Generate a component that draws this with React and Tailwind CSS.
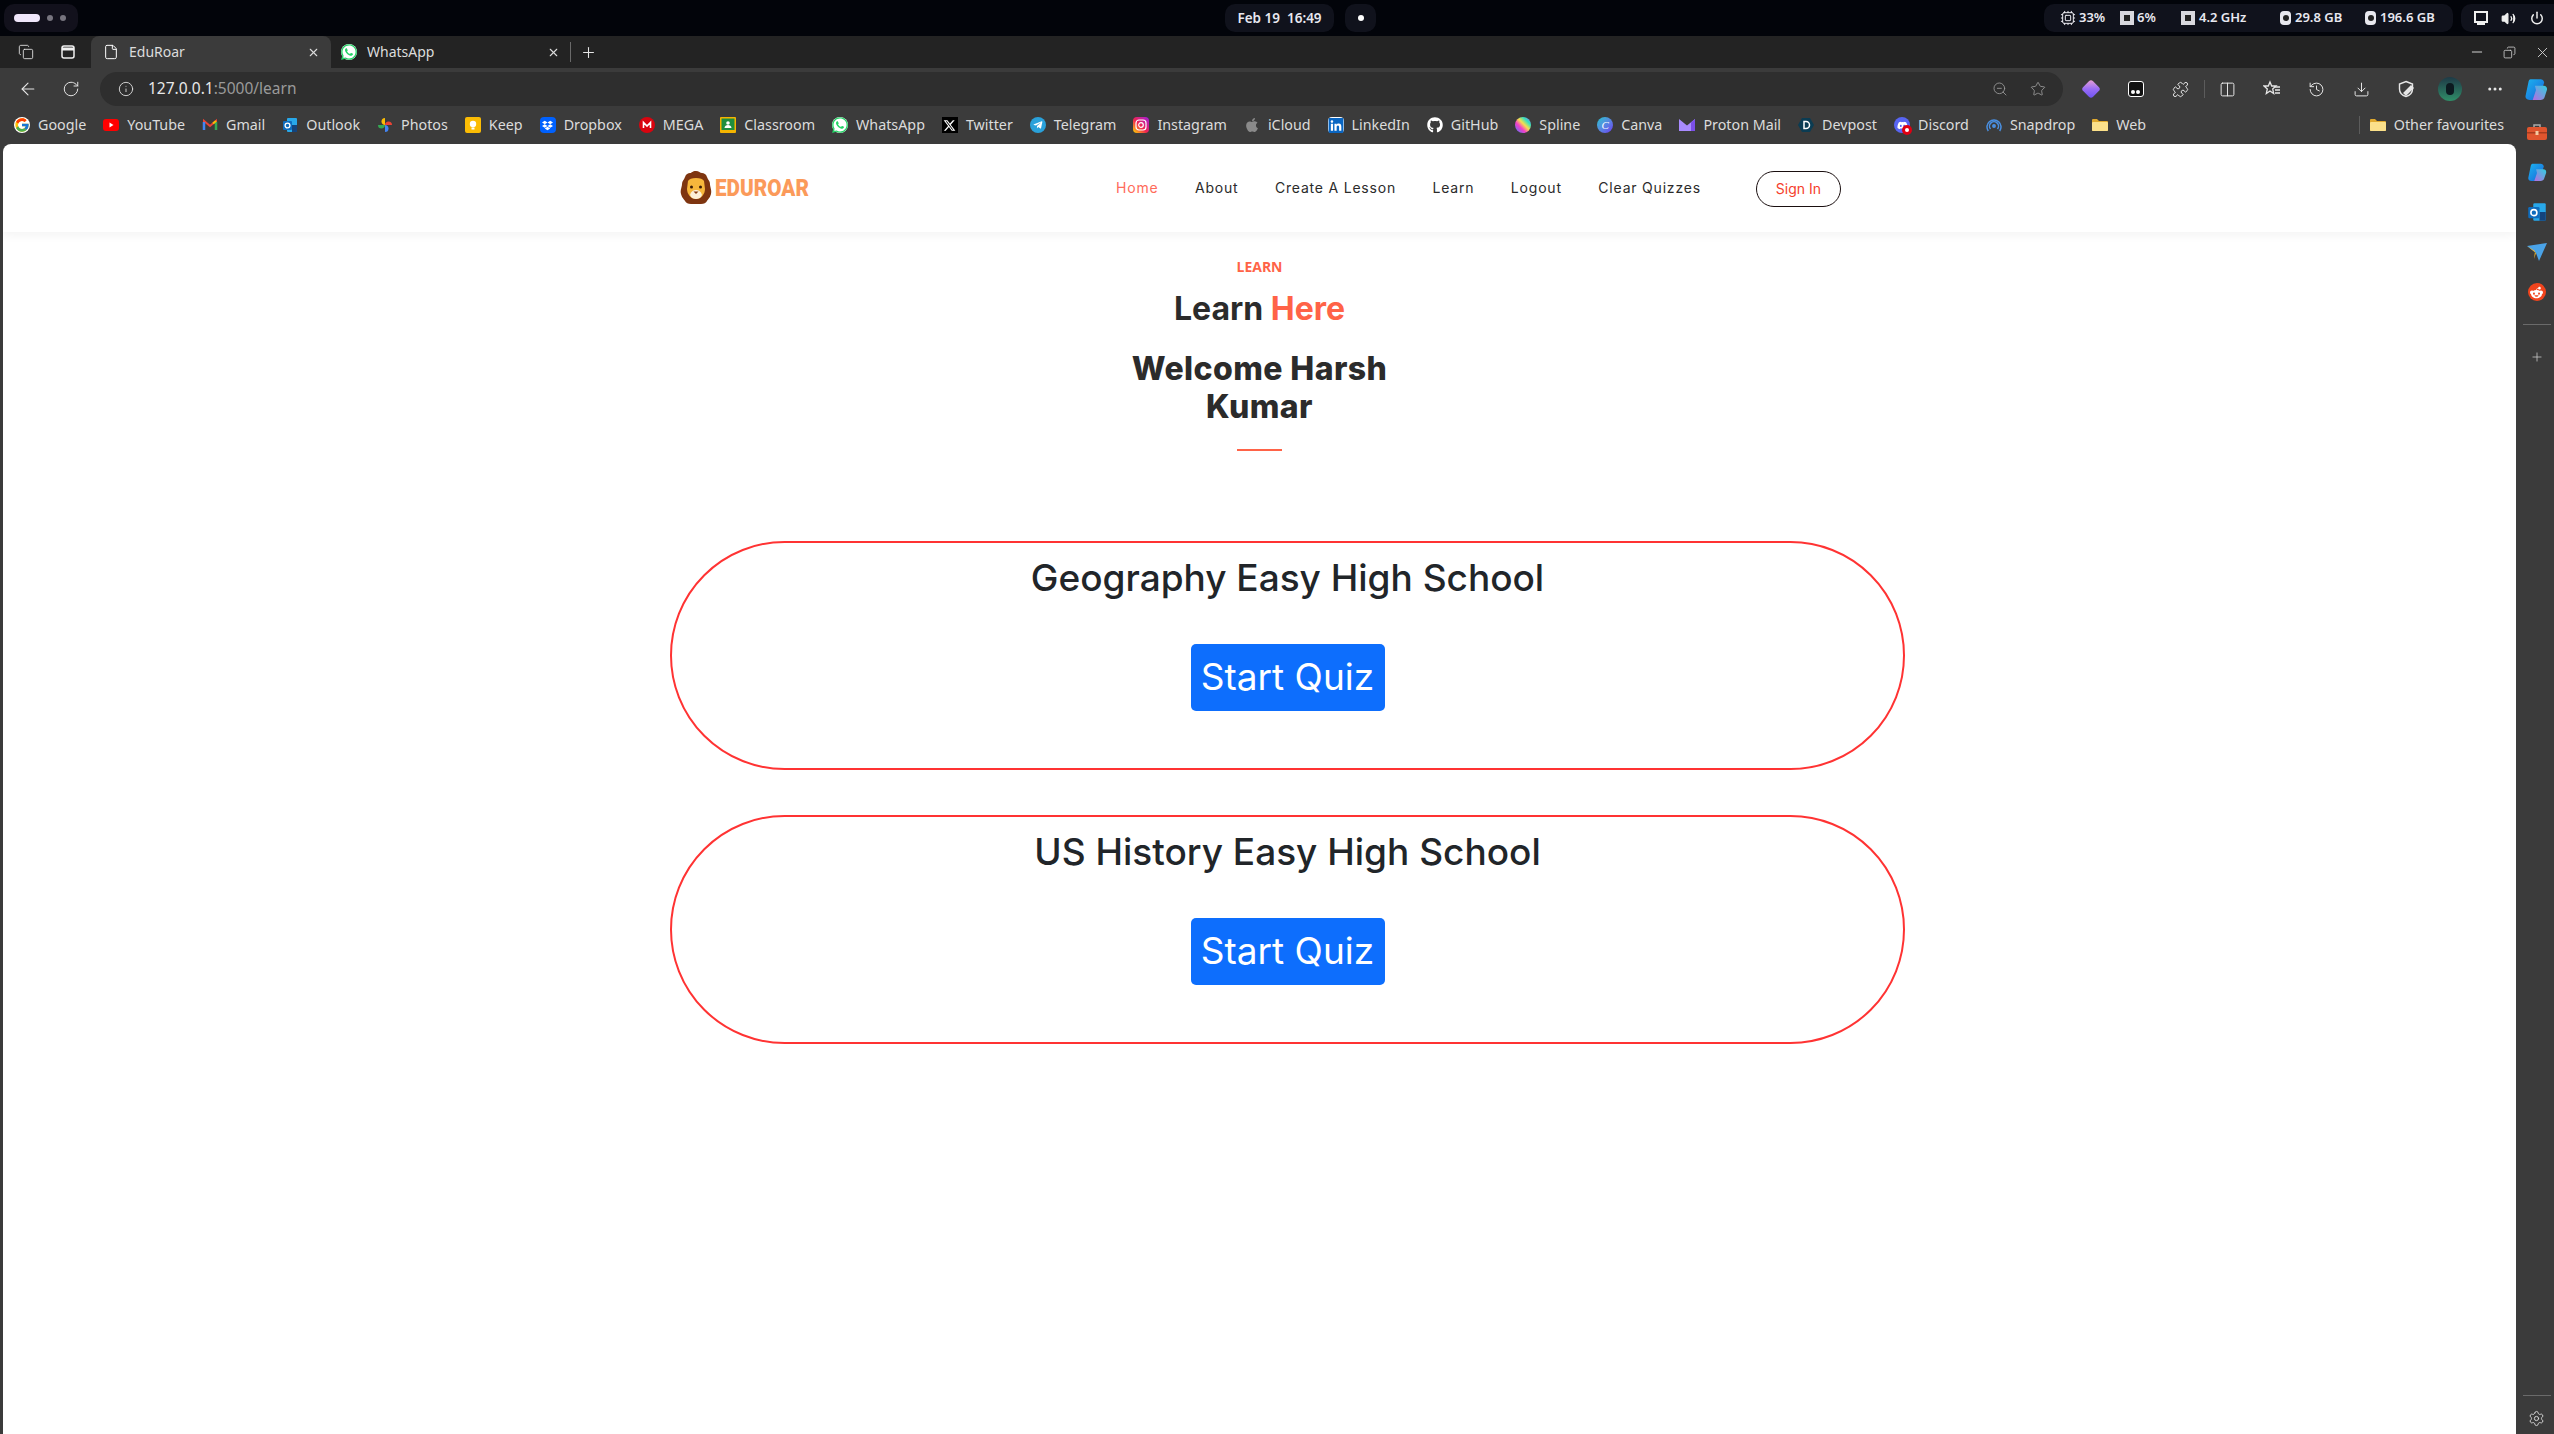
import React from "react";
import { X, Plus, ArrowLeft, RotateCw, Info, ZoomOut, Star, Puzzle, Columns2, History, Download, MoreHorizontal, Settings, Minus, Copy, Volume2, Power, File, Cpu } from "lucide-react";
import { FaWhatsapp, FaGithub, FaApple, FaLinkedin, FaDiscord, FaRedditAlien, FaXTwitter, FaDropbox } from "react-icons/fa6";
import { FaTelegramPlane } from "react-icons/fa";
import { FcGoogle } from "react-icons/fc";

const Yt = () => (
  <svg width="16" height="16" viewBox="0 0 16 16"><rect y="2" width="16" height="12" rx="3" fill="#f00" /><path d="M6.5 5.5v5l4-2.500z" fill="#fff" /></svg>
);
const Gmail = () => (
  <svg width="16" height="16" viewBox="0 0 16 16" fill="none"><path d="M2 13V4l6 5 6-5v9" stroke="#ea4335" strokeWidth="2" /><path d="M2 13V5" stroke="#4285f4" strokeWidth="2.500" /><path d="M14 13V5" stroke="#34a853" strokeWidth="2.500" /><path d="M11 6.500l3-2.500" stroke="#fbbc04" strokeWidth="2" /></svg>
);
const Outlook = ({ size = 16 }) => (
  <svg width={size} height={size} viewBox="0 0 16 16"><rect x="5" y="1" width="10" height="14" rx="1" fill="#28a8ea" /><rect x="10" y="8" width="5" height="7" fill="#14447d" /><rect x="1" y="4" width="9" height="9" rx="1" fill="#0f6cbd" /><circle cx="5.500" cy="8.500" r="2.400" fill="none" stroke="#fff" strokeWidth="1.300" /></svg>
);
const Photos = () => (
  <svg width="16" height="16" viewBox="0 0 16 16"><path d="M8 8V1a3.500 3.500 0 0 0-3.500 3.500C4.500 6.500 6 8 8 8z" fill="#fbbc04" /><path d="M8 8h7a3.500 3.500 0 0 0-3.500-3.500C9.500 4.500 8 6 8 8z" fill="#ea4335" /><path d="M8 8v7a3.500 3.500 0 0 0 3.500-3.500C11.500 9.500 10 8 8 8z" fill="#4285f4" /><path d="M8 8H1a3.500 3.500 0 0 0 3.500 3.500C6.500 11.500 8 10 8 8z" fill="#34a853" /></svg>
);
const Keep = () => (
  <svg width="16" height="16" viewBox="0 0 16 16"><rect width="16" height="16" rx="2" fill="#fbbc04" /><circle cx="8" cy="7" r="3.200" fill="#fff" /><rect x="6.500" y="10.500" width="3" height="2" fill="#fff" /></svg>
);
const Dropbox = () => (
  <span className="w-4 h-4 rounded-sm bg-[#0061fe] flex items-center justify-center text-white"><FaDropbox size={11} /></span>
);
const Mega = () => (
  <svg width="16" height="16" viewBox="0 0 16 16"><circle cx="8" cy="8" r="8" fill="#d9040f" /><path d="M4.500 11V5.500L8 9l3.500-3.500V11" fill="none" stroke="#fff" strokeWidth="1.600" /></svg>
);
const Classroom = () => (
  <svg width="16" height="16" viewBox="0 0 16 16"><rect width="16" height="16" rx="1" fill="#f4b400" /><rect x="1.500" y="1.500" width="13" height="11.500" fill="#1e8e3e" /><circle cx="8" cy="6" r="1.800" fill="#fff" /><path d="M4.500 11c0-4 7-4 7 0z" fill="#fff" /></svg>
);
const Wa = () => (
  <span className="w-4 h-4 rounded-full bg-white flex items-center justify-center text-[#25d366]"><FaWhatsapp size={18} /></span>
);
const Tw = () => (
  <span className="w-4 h-4 bg-black flex items-center justify-center text-white"><FaXTwitter size={13} /></span>
);
const Tg = () => (
  <span className="w-4 h-4 rounded-full bg-[#2aa1da] flex items-center justify-center text-white"><FaTelegramPlane size={10} /></span>
);
const Ig = () => (
  <svg width="16" height="16" viewBox="0 0 16 16">
    <defs><linearGradient id="ig" x1="0" y1="1" x2="1" y2="0"><stop offset="0" stopColor="#feda00" /><stop offset=".45" stopColor="#f0254f" /><stop offset="1" stopColor="#a01fe0" /></linearGradient></defs>
    <rect width="16" height="16" rx="4" fill="url(#ig)" /><rect x="3" y="3" width="10" height="10" rx="3" fill="none" stroke="#fff" strokeWidth="1.200" /><circle cx="8" cy="8" r="2.300" fill="none" stroke="#fff" strokeWidth="1.200" />
  </svg>
);
const Linked = () => (
  <span className="w-4 h-4 bg-white flex items-center justify-center text-[#0a66c2] rounded-sm"><FaLinkedin size={17} /></span>
);
const Spline = () => (
  <svg width="16" height="16" viewBox="0 0 16 16">
    <defs><linearGradient id="sp" x1="0" y1="1" x2="1" y2="0"><stop offset="0" stopColor="#3f7cff" /><stop offset=".35" stopColor="#f23ec8" /><stop offset=".55" stopColor="#f8e04c" /><stop offset=".75" stopColor="#35e0c0" /><stop offset="1" stopColor="#a25cff" /></linearGradient></defs>
    <circle cx="8" cy="8" r="8" fill="url(#sp)" />
  </svg>
);
const Canva = () => (
  <span className="w-4 h-4 rounded-full bg-gradient-to-br from-[#00c4cc] to-[#6a2ff0] flex items-center justify-center text-white text-[11px] italic leading-none font-['Liberation_Serif',serif]">C</span>
);
const Proton = () => (
  <svg width="16" height="16" viewBox="0 0 16 16"><path d="M0 2l8 6.500L16 2v12H0z" fill="#a98bff" /><path d="M16 2v12h-4V5.500z" fill="#7b4fe8" /></svg>
);
const Devpost = () => (
  <svg width="16" height="16" viewBox="0 0 16 16"><path d="M4 1h8l4 7-4 7H4L0 8z" fill="#0b3c53" /><path d="M6 4.500h2a3.500 3.500 0 0 1 0 7H6z" fill="none" stroke="#fff" strokeWidth="1.500" /></svg>
);
const Discord = () => (
  <span className="relative w-4 h-4 rounded-full bg-[#5865f2] flex items-center justify-center text-white">
    <FaDiscord size={11} />
    <span className="absolute -bottom-0.5 -right-0.5 w-2.5 h-2.5 rounded-full bg-[#e00012] flex items-center justify-center"><span className="w-1 h-1 rounded-full bg-white" /></span>
  </span>
);
const Snapdrop = () => (
  <svg width="16" height="16" viewBox="0 0 16 16" fill="none" stroke="#4a90e2" strokeWidth="1.500"><circle cx="8" cy="9" r="1.200" fill="#4a90e2" /><path d="M4.500 12a4.500 4.500 0 1 1 7 0" /><path d="M2.300 14a7 7 0 1 1 11.400 0" /></svg>
);
const Folder = () => (
  <svg width="16" height="16" viewBox="0 0 16 16"><path d="M0 3a1 1 0 0 1 1-1h4l2 2h8a1 1 0 0 1 1 1v8a1 1 0 0 1-1 1H1a1 1 0 0 1-1-1z" fill="#e0a92e" /><rect y="5" width="16" height="9" rx="1" fill="#fbe08a" /></svg>
);
const Copilot = ({ size = 22 }) => (
  <svg width={size} height={size} viewBox="0 0 22 22">
    <defs><linearGradient id="co1" x1="0" y1="0" x2="1" y2="1"><stop offset="0" stopColor="#1bb5f0" /><stop offset="1" stopColor="#1a62d8" /></linearGradient><linearGradient id="co2" x1="0" y1="1" x2="1" y2="0"><stop offset="0" stopColor="#b66be0" /><stop offset="1" stopColor="#2fd0e0" /></linearGradient></defs>
    <path d="M6 2h9c2 0 3 1 3.500 3L14 19c-.5 1.500-2 2-3 2H5c-3 0-4-2-3.500-4L4 5c.4-2 1-3 2-3z" fill="url(#co1)" />
    <path d="M10 8h8c2.500 0 3.500 2 3 4l-2 6c-.5 2-2 3-4 3H8l3-9z" fill="url(#co2)" />
  </svg>
);
const Lion = () => (
  <svg width="32" height="34" viewBox="0 0 32 34" className="shrink-0">
    <path d="M16 0c3 0 4 2 6 2s4 1 5 4 3 4 3 7 2 6 1 10-3 5-4 7-3 3-6 3H11c-3 0-5-1-6-3s-3-3-4-7 1-7 1-10 2-4 3-7 3-4 5-4 2-2 6-2z" fill="#7e3510" />
    <path d="M16 7c4 0 7 1 8 3l1 8c0 5-4 10-9 10S7 23 7 18l1-8c1-2 4-3 8-3z" fill="#f7b73c" />
    <circle cx="11.500" cy="16" r="1.500" fill="#3a1c08" /><circle cx="20.500" cy="16" r="1.500" fill="#3a1c08" />
    <path d="M10 24c1-4 4-5 6-5s5 1 6 5c-1 3-4 4-6 4s-5-1-6-4z" fill="#fdf0d8" />
    <path d="M13.500 20.500h5L16 23z" fill="#8a3d12" />
  </svg>
);
const Chip = ({ outline }) => (
  outline ? <Cpu size={16} strokeWidth={1.500} className="text-[#e8e8ee]" /> : (
    <span className="w-3.5 h-3.5 bg-[#d8d8de] flex items-center justify-center"><span className="w-1.5 h-1.5 bg-[#222]" /></span>
  )
);
const Disk = () => (
  <span className="w-[11px] h-[14px] rounded-sm bg-[#e8e8ee] flex items-center justify-center"><span className="w-1.5 h-1.5 rounded-full bg-[#222]" /></span>
);

const bookmarks = [
  ["Google", <FcGoogle size={16} className="bg-white rounded-full" />], ["YouTube", <Yt />], ["Gmail", <Gmail />], ["Outlook", <Outlook />],
  ["Photos", <Photos />], ["Keep", <Keep />], ["Dropbox", <Dropbox />], ["MEGA", <Mega />], ["Classroom", <Classroom />],
  ["WhatsApp", <Wa />], ["Twitter", <Tw />], ["Telegram", <Tg />], ["Instagram", <Ig />], ["iCloud", <FaApple size={16} className="text-[#8a8a8a]" />],
  ["LinkedIn", <Linked />], ["GitHub", <FaGithub size={16} className="text-white" />], ["Spline", <Spline />], ["Canva", <Canva />],
  ["Proton Mail", <Proton />], ["Devpost", <Devpost />], ["Discord", <Discord />], ["Snapdrop", <Snapdrop />], ["Web", <Folder />],
];

const navLinks = ["About", "Create A Lesson", "Learn", "Logout", "Clear Quizzes"];

const Bookmark = ({ label, icon }) => (
  <div className="flex items-center gap-2 shrink-0">
    <span className="w-4 h-4 flex items-center justify-center">{icon}</span>
    <span>{label}</span>
  </div>
);

const ToolSlot = ({ children }) => (
  <div className="w-[44.500px] flex items-center justify-center text-[#e6e6e6] shrink-0">{children}</div>
);

const QuizCard = ({ title }) => (
  <div className="w-[1235px] h-[229px] ml-[667px] rounded-full border-2 border-[#ff3333] flex flex-col items-center pt-[11px]">
    <h2 className="text-[37px] leading-[48px] font-medium text-[#212529]">{title}</h2>
    <button className="mt-[42px] w-[194px] h-[67px] pb-[2px] bg-[#0d6efd] rounded-[5px] text-white text-[37px] leading-none">Start Quiz</button>
  </div>
);

export default function App() {
  return (
    <div className="w-[2554px] h-[1434px] overflow-hidden flex flex-col bg-[#3b3b3b] font-['Noto_Sans',sans-serif]">
      {/* Desktop bar */}
      <div className="h-9 bg-[#02040a] flex items-center px-1 text-[13.500px] font-semibold text-[#e8e8f0] shrink-0">
        <div className="w-[74px] h-7 rounded-[10px] bg-[#12111c] flex items-center gap-[7px] pl-2.5">
          <span className="w-[26px] h-2 rounded-full bg-[#efe6fa]" />
          <span className="w-1.5 h-1.5 rounded-full bg-[#77757f]" />
          <span className="w-1.5 h-1.5 rounded-full bg-[#77757f]" />
        </div>
        <div className="ml-[1147px] w-[109px] h-7 rounded-[10px] bg-[#10121c] flex items-center justify-center whitespace-pre">Feb 19  16:49</div>
        <div className="ml-[11px] w-[31px] h-7 rounded-[10px] bg-[#10121c] flex items-center justify-center"><span className="w-1.5 h-1.5 rounded-full bg-white" /></div>
        <div className="ml-[668px] w-[409px] h-7 rounded-[10px] bg-[#10121c] flex items-center pl-4 whitespace-nowrap text-[13px]">
          <Chip outline /><span className="ml-[3px] w-[41px]">33%</span>
          <Chip /><span className="ml-[3px] w-[44px]">6%</span>
          <Chip /><span className="ml-[4px] w-[81px]">4.2 GHz</span>
          <Disk /><span className="ml-[4px] w-[70px]">29.8 GB</span>
          <Disk /><span className="ml-[4px]">196.6 GB</span>
        </div>
        <div className="ml-2 flex-1 h-7 rounded-l-[10px] bg-[#10121c] flex items-center pl-[13px] mr-[-4px] gap-[13px]">
          <svg width="14" height="14" viewBox="0 0 14 14" fill="none" stroke="#f0f0f0" strokeWidth="2"><rect x="1" y="1" width="12" height="10" /><path d="M3 13h8" /></svg>
          <Volume2 size={15} className="text-[#f0f0f0]" fill="#f0f0f0" />
          <Power size={14} strokeWidth={2.500} className="text-[#f0f0f0] ml-[1px]" />
        </div>
      </div>

      {/* Tab strip */}
      <div className="h-8 bg-[#232323] flex items-stretch text-sm text-[#dcdcdc] shrink-0">
        <div className="w-[91px] flex items-center pl-[18px] gap-[26px] text-[#e6e6e6]">
          <Copy size={16} strokeWidth={1.300} />
          <svg width="16" height="16" viewBox="0 0 16 16" fill="none" stroke="#f0f0f0" strokeWidth="1.500"><rect x="2" y="2" width="12" height="12" rx="2" /><path d="M2 5h12" strokeWidth="3" /></svg>
        </div>
        <div className="w-[240px] bg-[#3b3b3b] rounded-t-lg flex items-center pl-[12px] pr-[11px]">
          <File size={16} strokeWidth={1.500} className="text-white" />
          <span className="ml-[10px]">EduRoar</span>
          <X size={13} className="ml-auto" />
        </div>
        <div className="w-[239px] flex items-center pl-[10px] pr-[10px] border-r-0">
          <Wa />
          <span className="ml-[10px]">WhatsApp</span>
          <X size={13} className="ml-auto" />
        </div>
        <div className="self-center h-5 w-px bg-[#6a6a6a]" />
        <Plus size={17} strokeWidth={1.500} className="self-center ml-[9px] text-[#e6e6e6]" />
        <div className="ml-auto flex items-center gap-[18px] pr-[3px] text-[#d0d0d0]">
          <Minus size={16} strokeWidth={1.500} />
          <Copy size={13} strokeWidth={1.500} className="-scale-x-100" />
          <X size={17} strokeWidth={1.300} />
        </div>
      </div>

      {/* Toolbar */}
      <div className="h-[38px] flex items-center pt-[4px] shrink-0 text-[#e6e6e6]">
        <div className="w-[100px] flex items-center pl-[18px] gap-[24px]">
          <ArrowLeft size={20} strokeWidth={1.300} />
          <RotateCw size={18} strokeWidth={1.300} />
        </div>
        <div className="w-[1963px] h-[34px] rounded-full bg-[#2e2e2e] flex items-center pl-[18px] pr-[17px] text-[15.500px]">
          <Info size={16} strokeWidth={1.300} />
          <span className="ml-[14px] text-[#e8e8e8]">127.0.0.1<span className="text-[#9a9a9a]">:5000/learn</span></span>
          <ZoomOut size={16} strokeWidth={1.300} className="ml-auto text-[#9a9a9a]" />
          <Star size={16} strokeWidth={1.300} className="ml-[22px] text-[#9a9a9a]" />
        </div>
        <div className="ml-[6px] flex items-center">
          <ToolSlot><span className="w-3.5 h-3.5 rotate-45 rounded-[3px] bg-gradient-to-br from-[#f0a0d0] via-[#9a6cf5] to-[#6a4ff0]" /></ToolSlot>
          <ToolSlot>
            <span className="w-4 h-4 rounded-[3px] border border-white bg-[#111] flex items-end justify-center gap-[1px] pb-[2px]"><span className="w-1 h-1 rounded-full bg-white" /><span className="w-1 h-1 rounded-full bg-white" /></span>
          </ToolSlot>
          <ToolSlot><Puzzle size={17} strokeWidth={1.400} /></ToolSlot>
          <div className="w-px h-[18px] bg-[#5c5c5c] mx-[1px]" />
          <ToolSlot><Columns2 size={17} strokeWidth={1.400} /></ToolSlot>
          <ToolSlot>
            <svg width="18" height="18" viewBox="0 0 18 18" fill="none" stroke="#e6e6e6" strokeWidth="1.300"><path d="M7 2l1.700 4H13l-3.300 3 1 4.500L7 11l-3.700 2.500 1-4.500L1 6h4.300z" /><path d="M12 7h5M12 10h5M12 13h5" /></svg>
          </ToolSlot>
          <ToolSlot><History size={17} strokeWidth={1.400} /></ToolSlot>
          <ToolSlot><Download size={17} strokeWidth={1.400} /></ToolSlot>
          <ToolSlot>
            <svg width="18" height="18" viewBox="0 0 18 18" fill="none" stroke="#e6e6e6" strokeWidth="1.400"><path d="M9 1.500l6.500 2.500v5c0 4-3 6.500-6.500 7.500-3.500-1-6.500-3.500-6.500-7.500V4z" /><path d="M7 13l7-7 2 2-7 7z" fill="#e6e6e6" /></svg>
          </ToolSlot>
          <ToolSlot>
            <span className="w-6 h-6 rounded-full bg-gradient-to-b from-[#1e3a46] to-[#2f8f68] flex items-center justify-center"><span className="w-2 h-3 rounded-sm bg-[#0c1a20]" /></span>
          </ToolSlot>
          <ToolSlot><MoreHorizontal size={18} /></ToolSlot>
          <div className="w-[34px] ml-[2px] flex items-center justify-center"><Copilot size={24} /></div>
        </div>
      </div>

      <div className="flex-1 flex min-h-0">
        <div className="w-[2516px] flex flex-col">
          {/* Bookmarks */}
          <div className="h-[38px] flex items-center pl-[14px] pr-[12px] gap-[17px] text-[14.300px] text-[#dcdcdc] whitespace-nowrap shrink-0">
            {bookmarks.map(([label, icon]) => <Bookmark key={label} label={label} icon={icon} />)}
            <div className="ml-auto w-px h-[18px] bg-[#5c5c5c] mr-[-7px]" />
            <Bookmark label="Other favourites" icon={<Folder />} />
          </div>

          {/* Page */}
          <div className="flex-1 ml-[3px] bg-white rounded-t-lg overflow-hidden">
            <nav className="h-[88px] flex items-center pl-[677px] shadow-[0_3px_10px_rgba(0,0,0,0.05)] font-['Inter',sans-serif] text-sm text-[#2b2b2b] whitespace-nowrap">
              <div className="w-[130px] flex items-center shrink-0">
                <Lion />
                <span className="ml-[3px] text-[23px] leading-none font-black text-[#fb9a5a] font-['Roboto',sans-serif] scale-x-90 origin-left">EDUROAR</span>
              </div>
              <a className="ml-[306px] text-[#ff6b5a] tracking-[0.8px] -mt-[1px]">Home</a>
              {navLinks.map((l) => (
                <a key={l} className="ml-[36.500px] tracking-[0.8px] -mt-[1px]">{l}</a>
              ))}
              <button className="ml-[55px] w-[85px] h-9 mt-[2px] rounded-full border border-[#1a0f10] text-[#f5402c]">Sign In</button>
            </nav>

            <div className="text-center font-['Inter',sans-serif] w-[2513px]">
              <div className="mt-[25px] text-[14px] leading-5 font-bold text-[#ff6347] font-['Open_Sans',sans-serif]">LEARN</div>
              <h1 className="mt-[12px] text-[32px] leading-10 font-bold text-[#2b2b2b]">Learn <span className="text-[#ff6347]">Here</span></h1>
              <h2 className="mt-[21px] mx-auto w-[300px] text-[32px] leading-[38px] font-extrabold tracking-[0.4px] text-[#2b2b2b]">Welcome Harsh Kumar</h2>
              <div className="mt-[23px] mx-auto w-[45px] h-0.5 bg-[#ff6347]" />
            </div>

            <div className="mt-[90px] flex flex-col gap-[45px] font-['Inter',sans-serif]">
              <QuizCard title="Geography Easy High School" />
              <QuizCard title="US History Easy High School" />
            </div>
          </div>
        </div>

        {/* Side rail */}
        <div className="flex-1 flex flex-col items-center pt-[6px] pl-[3px]">
          <div className="h-10 flex items-center">
            <svg width="20" height="18" viewBox="0 0 20 18"><path d="M7 4V2h6v2" fill="none" stroke="#aaa" strokeWidth="1.500" /><rect y="4" width="20" height="13" rx="2" fill="#e0552e" /><rect y="9" width="20" height="1.500" fill="#a83c1e" /><rect x="8.500" y="8" width="3" height="4" fill="#f4c9a0" /></svg>
          </div>
          <div className="h-10 flex items-center"><Copilot size={20} /></div>
          <div className="h-10 flex items-center"><Outlook size={20} /></div>
          <div className="h-10 flex items-center">
            <svg width="20" height="18" viewBox="0 0 20 18"><path d="M0 3l20-3-8 18-3-8z" fill="#4aa3e8" /><path d="M0 3l9 7-2 6 1-8z" fill="#f0b429" /></svg>
          </div>
          <div className="h-10 flex items-center">
            <span className="w-[18px] h-[18px] rounded-full bg-[#f1441d] flex items-center justify-center text-white"><FaRedditAlien size={13} /></span>
          </div>
          <div className="mt-3 w-7 h-px bg-[#6a6a6a]" />
          <Plus size={14} strokeWidth={1.300} className="mt-[25px] text-[#cfcfcf]" />
          <div className="mt-auto w-7 h-px bg-[#6a6a6a]" />
          <Settings size={17} strokeWidth={1.300} className="mt-[14px] mb-[7px] text-[#dcdcdc]" />
        </div>
      </div>
    </div>
  );
}
